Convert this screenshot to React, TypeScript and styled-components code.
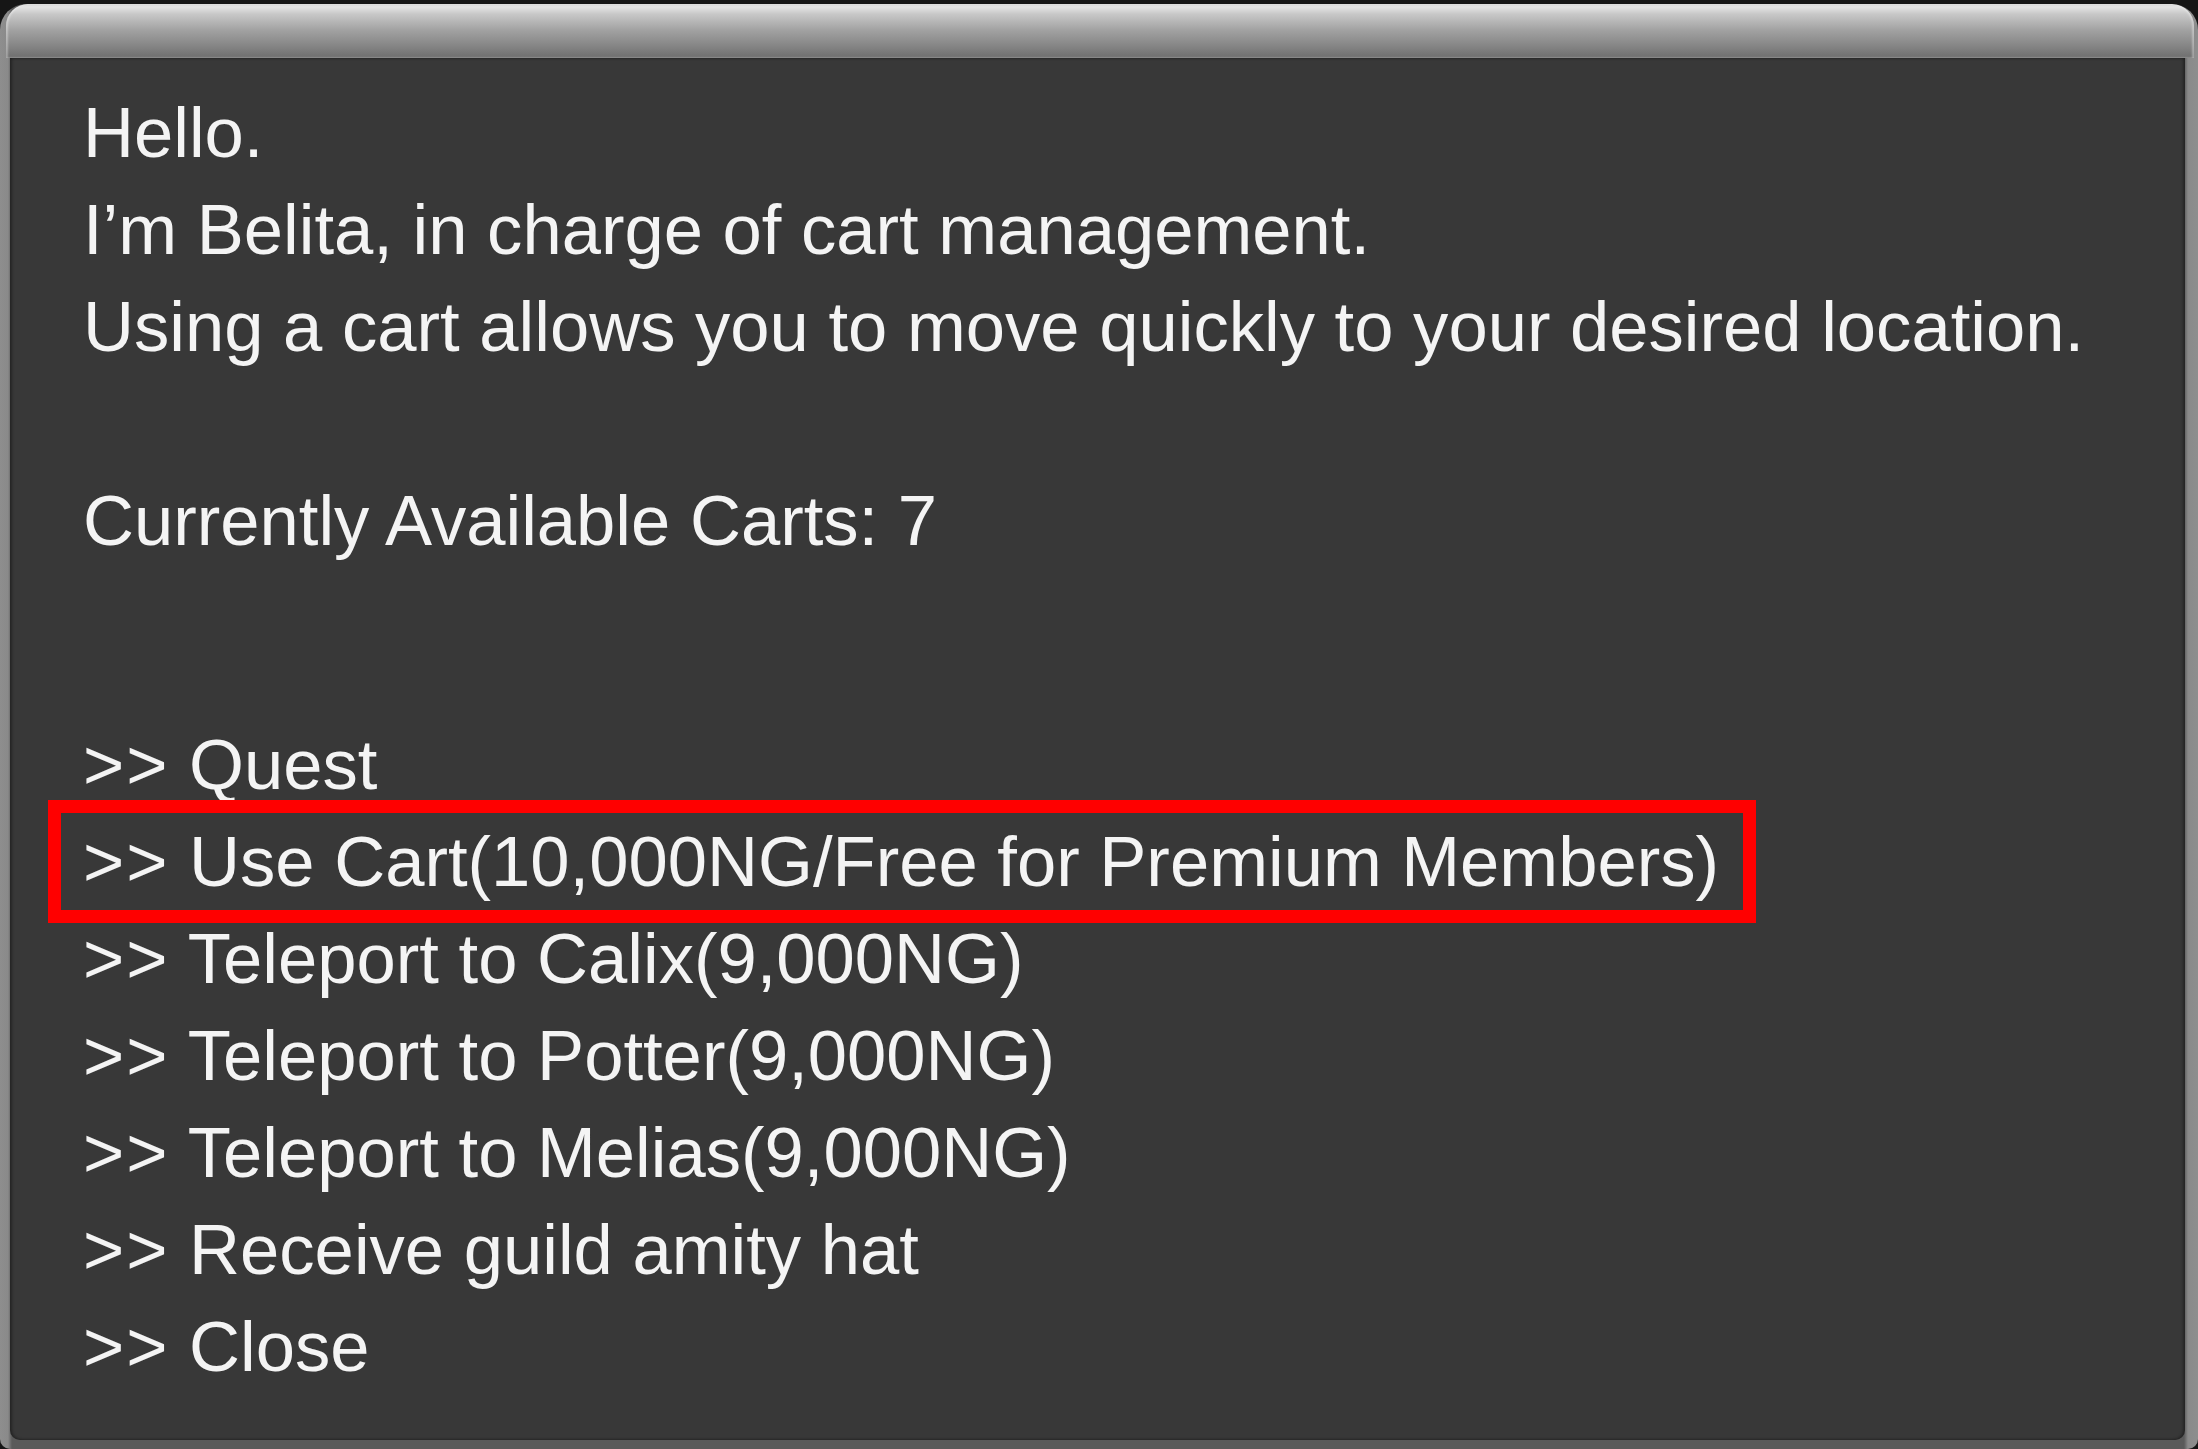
import React from "react";
import styled, { createGlobalStyle } from "styled-components";

const GlobalStyle = createGlobalStyle`
  html, body {
    margin: 0;
    padding: 0;
    background: #161616;
  }
  * { box-sizing: border-box; }
`;

const Frame = styled.div`
  margin-top: 4px;
  width: 2198px;
  height: 1445px;
  display: flex;
  flex-direction: column;
  border-radius: 26px 26px 10px 10px;
  overflow: hidden;
  background: linear-gradient(90deg, #8e8e8e 0px, #8a8a8a 8px, #5a5a5a 12px, #5a5a5a 2184px, #8a8a8a 2188px, #8e8e8e 2198px);
`;

const TitleBar = styled.div`
  flex: 0 0 54px;
  margin: 0 4px 0 6px;
  border-radius: 22px 22px 0 0;
  background: linear-gradient(180deg, #d4d4d4 0px, #e4e4e4 3px, #c8c8c8 10px, #a2a2a2 26px, #858585 42px, #6e6e6e 54px);
  box-shadow: inset 2px 0 2px rgba(255, 255, 255, 0.35), inset -2px 0 2px rgba(255, 255, 255, 0.35);
`;

const Panel = styled.div`
  flex: 1 1 auto;
  margin: 0 13px 9px 10px;
  padding: 26px 0 0 73px;
  background: #383838;
  border-radius: 0 0 10px 10px;
  box-shadow: inset 2px 0 3px rgba(0, 0, 0, 0.35), inset -2px 0 3px rgba(0, 0, 0, 0.35);
  color: #f4f4f4;
  font-family: "Liberation Sans", Arial, sans-serif;
  font-size: 70.6px;
  line-height: 97px;
  white-space: nowrap;
`;

const Block = styled.div<{ $gap?: number }>`
  margin-top: ${(p) => p.$gap ?? 0}px;
`;

const Line = styled.div`
  height: 97px;
`;

const OptionRow = styled.div`
  height: 97px;
`;

const Option = styled.div<{ $active?: boolean }>`
  height: 97px;
  ${(p) =>
    p.$active
      ? `
    display: inline-block;
    vertical-align: top;
    padding: 0 24px 0 22px;
    margin-left: -22px;
    outline: 13px solid #ff0000;
  `
      : ""}
`;

const Arrows = styled.span`
  letter-spacing: 2px;
`;

const options = [
  "Quest",
  "Use Cart(10,000NG/Free for Premium Members)",
  "Teleport to Calix(9,000NG)",
  "Teleport to Potter(9,000NG)",
  "Teleport to Melias(9,000NG)",
  "Receive guild amity hat",
  "Close",
];

export default function App() {
  return (
    <>
      <GlobalStyle />
      <Frame>
        <TitleBar />
        <Panel>
          <Block>
            <Line>Hello.</Line>
            <Line>I’m Belita, in charge of cart management.</Line>
            <Line>Using a cart allows you to move quickly to your desired location.</Line>
          </Block>
          <Block $gap={97}>
            <Line>Currently Available Carts: 7</Line>
          </Block>
          <Block $gap={147}>
            {options.map((o, i) => (
              <OptionRow key={o}>
                <Option $active={i === 1}>
                  <Arrows>{">>"}</Arrows> {o}
                </Option>
              </OptionRow>
            ))}
          </Block>
        </Panel>
      </Frame>
    </>
  );
}
